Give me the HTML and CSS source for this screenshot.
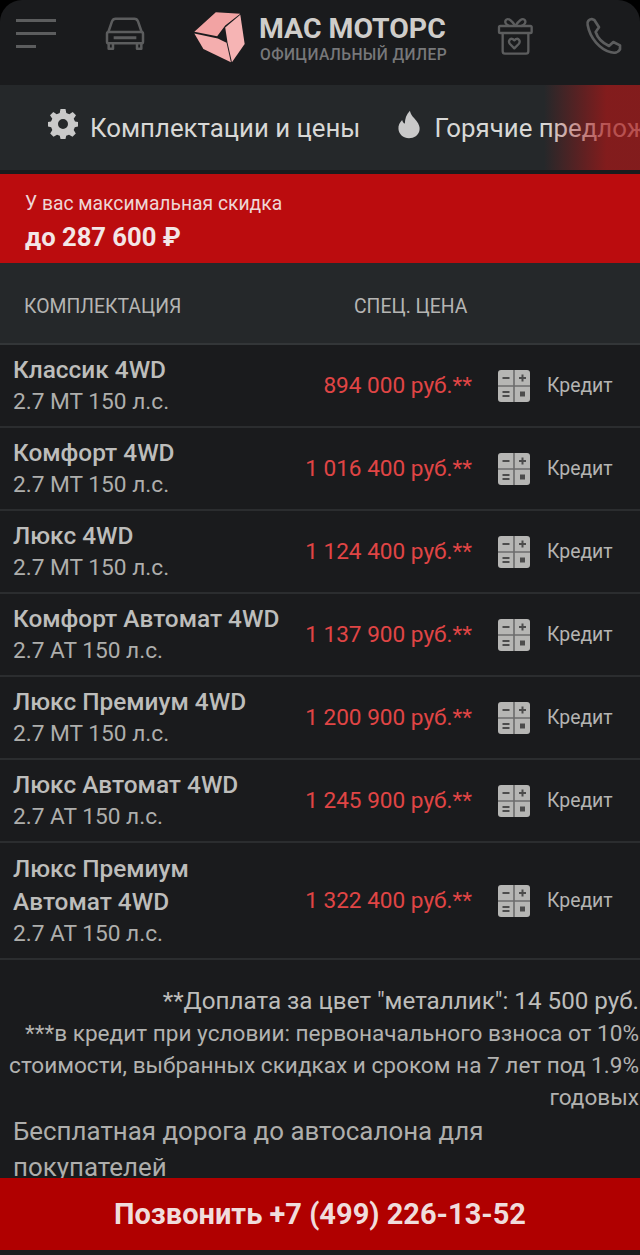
FILE: index.html
```html
<!DOCTYPE html>
<html lang="ru">
<head>
  <meta charset="UTF-8" />
  <meta name="viewport" content="width=device-width, initial-scale=1" />
  <title>МАС МОТОРС</title>
  <link rel="stylesheet" href="styles.css">
</head>
<body>
  <div class="page">
    <header class="header">
      <div class="burger"><span></span><span></span><span class="short"></span></div>
      <svg class="icon-car" viewBox="0 0 180 150" fill="none" stroke="#5c5d5e" stroke-width="7.500" stroke-linejoin="round">
        <path d="M40 66 L51 34 Q54 26 62 26 H118 Q126 26 129 34 L140 66" />
        <rect x="36" y="66" width="108" height="34" rx="5" />
        <path d="M56 83 H124" stroke-width="9" />
        <path d="M41 100 V116 H54 V100 M126 100 V116 H139 V100" />
      </svg>
      <div class="logo">
        <svg class="logo-mark" viewBox="27 20 152 152">
          <path d="M28 79 L92 21 L165 25 L120 60 L96 92 Z" fill="#f2a3a3" />
          <path d="M165 28 L178 115 L140 170 L127 112 L120 66 Z" fill="#f6b4b4" />
          <path d="M28 84 L98 99 L124 112 L137 170 L55 130 Z" fill="#f4aeae" />
        </svg>
        <div class="logo-text">
          <div class="logo-name">МАС МОТОРС</div>
          <div class="logo-sub">ОФИЦИАЛЬНЫЙ ДИЛЕР</div>
        </div>
      </div>
      <svg class="icon-gift" viewBox="0 0 180 150" fill="none" stroke="#5c5d5e" stroke-width="7" stroke-linejoin="round">
        <rect x="27" y="48" width="98" height="21" rx="4" />
        <path d="M38 69 V124 Q38 131 45 131 H108 Q115 131 115 124 V69" />
        <path d="M76 48 C66 32 56 24 49 29 C42 35 48 46 58 48 M76 48 C86 32 96 24 103 29 C110 35 104 46 94 48" />
        <path d="M73 115 L60 102 C53 94 60 84 68 87 L73 91 L78 87 C86 84 93 94 86 102 Z" />
      </svg>
      <svg class="icon-phone" viewBox="0 0 180 150" fill="none" stroke="#5c5d5e" stroke-width="8" stroke-linejoin="round">
        <path d="M38 45 C35 35 42 28 50 27 L58 30 L72 52 L62 66 C68 85 85 100 102 108 L115 96 L135 106 L135 118 C130 128 118 130 108 127 C75 118 45 85 38 45 Z" />
      </svg>
    </header>

    <nav class="tabs">
      <div class="tab">
        <svg class="tab-icon" viewBox="0 0 30 30">
          <path fill="#c9c9c9" fill-rule="evenodd" d="M12.500 0 H17.500 L18.300 4 L21.300 5.200 L24.700 3 L28 6.300 L25.700 9.700 L27 12.600 L30 13 V17.500 L26.800 18.200 L25.700 21 L27.800 24.500 L24.500 27.800 L21 25.700 L18.200 26.800 L17.500 30 H12.500 L11.800 26.800 L9 25.700 L5.500 27.800 L2.200 24.500 L4.300 21 L3.200 18.200 L0 17.500 V13 L3 12.600 L4.300 9.700 L2 6.300 L5.300 3 L8.700 5.200 L11.700 4 Z M15 10 A5 5 0 1 0 15 20 A5 5 0 1 0 15 10 Z" />
        </svg>
        Комплектации и цены
      </div>
      <div class="tab">
        <svg class="tab-flame" viewBox="0 0 24 30">
          <path fill="#c9c9c9" d="M13 0 C14 5 17 7 20 11 C23 15 24 18 23.500 21 C22.500 27 17.500 30 12 30 C6 30 1 26 0.500 20 C0 16 2 12.500 4.500 10 C5 12 6 13.500 7.500 14 C7.500 9 9 4 13 0 Z" />
        </svg>
        Горячие предложения
      </div>
      <div class="tabs-fade"></div>
    </nav>

    <section class="discount">
      <div class="discount-label">У вас максимальная скидка</div>
      <div class="discount-value">до 287 600 ₽</div>
    </section>

    <div class="table-head">
      <div class="th-name">КОМПЛЕКТАЦИЯ</div>
      <div class="th-price">СПЕЦ. ЦЕНА</div>
    </div>

    <div class="row">
      <div class="trim"><div class="trim-name">Классик 4WD</div><div class="trim-spec">2.7 MT 150 л.с.</div></div>
      <div class="price">894 000 руб.**</div>
      <svg class="calc" viewBox="0 0 32 32"><use href="#calc" /></svg>
      <div class="credit">Кредит</div>
    </div>
    <div class="row">
      <div class="trim"><div class="trim-name">Комфорт 4WD</div><div class="trim-spec">2.7 MT 150 л.с.</div></div>
      <div class="price">1 016 400 руб.**</div>
      <svg class="calc" viewBox="0 0 32 32"><use href="#calc" /></svg>
      <div class="credit">Кредит</div>
    </div>
    <div class="row">
      <div class="trim"><div class="trim-name">Люкс 4WD</div><div class="trim-spec">2.7 MT 150 л.с.</div></div>
      <div class="price">1 124 400 руб.**</div>
      <svg class="calc" viewBox="0 0 32 32"><use href="#calc" /></svg>
      <div class="credit">Кредит</div>
    </div>
    <div class="row">
      <div class="trim"><div class="trim-name">Комфорт Автомат 4WD</div><div class="trim-spec">2.7 AT 150 л.с.</div></div>
      <div class="price">1 137 900 руб.**</div>
      <svg class="calc" viewBox="0 0 32 32"><use href="#calc" /></svg>
      <div class="credit">Кредит</div>
    </div>
    <div class="row">
      <div class="trim"><div class="trim-name">Люкс Премиум 4WD</div><div class="trim-spec">2.7 MT 150 л.с.</div></div>
      <div class="price">1 200 900 руб.**</div>
      <svg class="calc" viewBox="0 0 32 32"><use href="#calc" /></svg>
      <div class="credit">Кредит</div>
    </div>
    <div class="row">
      <div class="trim"><div class="trim-name">Люкс Автомат 4WD</div><div class="trim-spec">2.7 AT 150 л.с.</div></div>
      <div class="price">1 245 900 руб.**</div>
      <svg class="calc" viewBox="0 0 32 32"><use href="#calc" /></svg>
      <div class="credit">Кредит</div>
    </div>
    <div class="row row-tall">
      <div class="trim"><div class="trim-name">Люкс Премиум<br>Автомат 4WD</div><div class="trim-spec">2.7 AT 150 л.с.</div></div>
      <div class="price">1 322 400 руб.**</div>
      <svg class="calc" viewBox="0 0 32 32"><use href="#calc" /></svg>
      <div class="credit">Кредит</div>
    </div>

    <div class="notes">
      <div class="note-big">**Доплата за цвет "металлик": 14 500 руб.</div>
      <div>***в кредит при условии: первоначального взноса от 10% стоимости, выбранных скидках и сроком на 7 лет под 1.9% годовых</div>
    </div>
    <p class="promo">Бесплатная дорога до автосалона для покупателей</p>

    <a class="call" href="#">Позвонить +7 (499) 226-13-52</a>
  </div>

  <svg class="defs" width="0" height="0">
    <symbol id="calc" viewBox="0 0 32 32">
      <rect width="32" height="32" rx="3" fill="#b6b6b4" />
      <path fill="#6c6c6c" d="M15.200 0 H16.800 V32 H15.200 Z M0 15.200 H32 V16.800 H0 Z" />
      <path fill="#4c4c4c" d="M4.500 7 H11.500 V9 H4.500 Z M21 7 H23.500 V4.500 H25.500 V7 H28 V9 H25.500 V11.500 H23.500 V9 H21 Z M4.500 21 H11.500 V23 H4.500 Z M4.500 25 H11.500 V27 H4.500 Z M22 21.500 H27 V26.500 H22 Z" />
    </symbol>
  </svg>
</body>
</html>
```

FILE: styles.css
```css
* {
  box-sizing: border-box;
}
html, body {
  margin: 0;
  background: #000;
}
body {
  font-family: Roboto, Arial, sans-serif;
  color: #c4c4c2;
}
.page {
  position: relative;
  width: 640px;
  height: 1255px;
  overflow: hidden;
  background: #1a1b1d;
  border-radius: 22px 22px 0 0;
}
.defs {
  position: absolute;
}

/* header */
.header {
  display: flex;
  align-items: center;
  height: 85px;
  padding: 0 0 15px 16px;
}
.burger {
  width: 40px;
  margin-top: -4px;
}
.burger span {
  display: block;
  height: 3px;
  margin-bottom: 10px;
  background: #5c5d5e;
}
.burger .short {
  width: 20px;
  margin-bottom: 0;
}
.icon-car {
  width: 60px;
  height: 50px;
  margin-left: 39px;
}
.logo {
  display: flex;
  align-items: center;
  margin-left: 39px;
}
.logo-mark {
  width: 51px;
  height: 51px;
  margin-top: 4px;
}
.logo-text {
  width: 191px;
  margin-left: 14px;
  margin-top: 8px;
}
.logo-name {
  font-size: 28.400px;
  font-weight: 700;
  line-height: 32px;
  color: #cfcdca;
}
.logo-sub {
  font-size: 15.600px;
  font-weight: 500;
  line-height: 20px;
  color: #77787a;
  letter-spacing: 0.4px;
  margin-left: 1px;
}
.icon-gift {
  width: 60px;
  height: 50px;
  margin-left: 40px;
}
.icon-phone {
  width: 60px;
  height: 50px;
  margin-left: 25px;
}

/* tabs */
.tabs {
  position: relative;
  display: flex;
  align-items: center;
  height: 85px;
  padding-left: 48px;
  overflow: hidden;
  background: #25282a;
  font-size: 25.800px;
  color: #d8d8d6;
  white-space: nowrap;
}
.tab {
  display: flex;
  align-items: center;
  margin-right: 38px;
}
.tab-icon {
  width: 30px;
  height: 30px;
  margin-right: 12px;
  margin-top: -7px;
}
.tab-flame {
  width: 22px;
  height: 29px;
  margin-right: 14px;
  margin-top: -7px;
}
.tabs-fade {
  position: absolute;
  top: 0;
  right: 0;
  bottom: 0;
  width: 96px;
  background: linear-gradient(to right, rgba(170, 23, 23, 0), rgba(170, 23, 23, 0.7) 65%);
}

/* discount */
.discount {
  height: 89px;
  margin-top: 4px;
  padding: 18px 25px 0;
  background: #bb0c0e;
  color: #eed6d6;
}
.discount-label {
  font-size: 19.300px;
  line-height: 24px;
}
.discount-value {
  margin-top: 6px;
  font-size: 25.600px;
  font-weight: 700;
  line-height: 30px;
  color: #f3e6e6;
}

/* table */
.table-head {
  display: flex;
  align-items: center;
  height: 82px;
  padding: 6px 0 0 24px;
  background: #25282a;
  border-bottom: 2px solid #333638;
  font-size: 19.400px;
  color: #b5b5b3;
}
.th-name {
  width: 330px;
}
.row {
  display: flex;
  align-items: center;
  height: 83px;
  padding-left: 13px;
  border-bottom: 2px solid #2b2d2f;
}
.row-tall {
  height: 117px;
}
.trim {
  flex: 1;
  min-width: 0;
  white-space: nowrap;
}
.trim-name {
  font-size: 24.400px;
  font-weight: 500;
  line-height: 33px;
  color: #bdbdbb;
}
.trim-spec {
  font-size: 22.700px;
  line-height: 32px;
  color: #aeaeac;
}
.price {
  width: 190px;
  margin-right: 26px;
  text-align: right;
  font-size: 22.600px;
  color: #e04545;
  white-space: nowrap;
}
.calc {
  flex-shrink: 0;
  width: 32px;
  height: 32px;
  margin-right: 17px;
}
.credit {
  width: 93px;
  font-size: 19.400px;
  color: #b4b4b2;
}

/* notes */
.notes {
  padding: 25px 1px 0 8px;
  text-align: right;
  font-size: 22.600px;
  line-height: 32px;
  color: #b2b2b0;
}
.note-big {
  margin-bottom: 1px;
  font-size: 24.200px;
  color: #bdbdbb;
}
.promo {
  margin: -1px 0 0;
  padding: 0 100px 0 13px;
  font-size: 25.900px;
  line-height: 36px;
  color: #aeaeac;
}

/* call button */
.call {
  position: absolute;
  left: 0;
  right: 0;
  top: 1178px;
  height: 72px;
  line-height: 73px;
  text-align: center;
  background: #b00000;
  font-size: 29px;
  font-weight: 700;
  color: #f0dcdc;
  text-decoration: none;
}
```
